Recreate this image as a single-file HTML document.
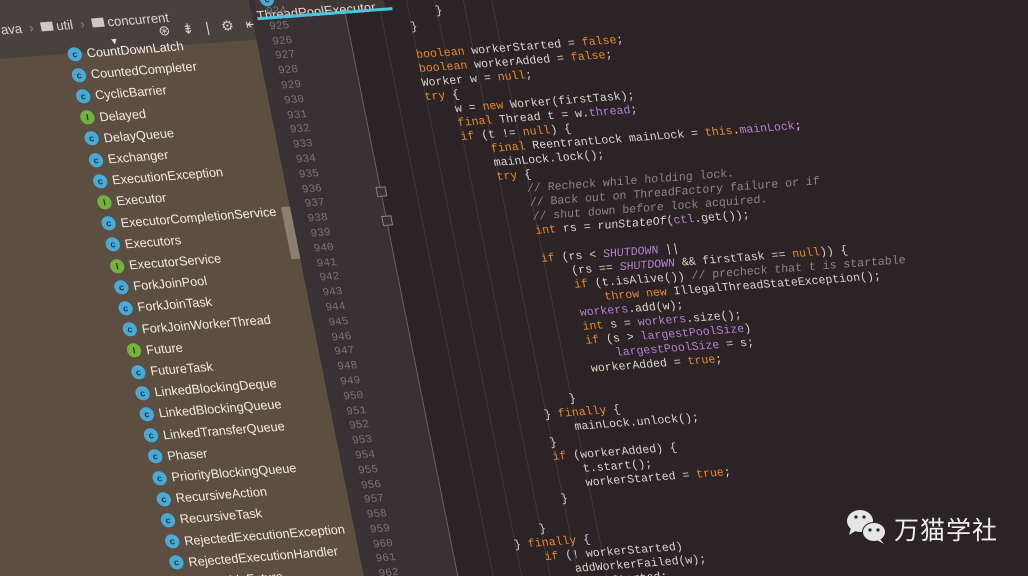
<!DOCTYPE html>
<html><head><meta charset="utf-8"><style>
html{margin:0;padding:0;width:1028px;height:576px;overflow:hidden}
body{margin:0;padding:0;width:1028px;height:576px;overflow:hidden;background:#2b2325;position:relative;font-family:"Liberation Sans",sans-serif}
#clip{position:absolute;left:0;top:0;width:1028px;height:576px;overflow:hidden}
#w{position:absolute;left:0;top:0;width:1100px;height:620px;transform-origin:0 0;transform:matrix(1,-0.075,0.2,1,0,0)}
.abs{position:absolute}
#panel{left:-300px;top:-100px;width:545px;height:720px;background:#5d4e42}
#tool{left:-300px;top:-100px;width:545px;height:158px;background:#48423e}
#menu{left:-300px;top:-100px;width:700px;height:100px;background:#3d3a39}
#gut{left:245px;top:-100px;width:92px;height:720px;background:#393133}
#tab{left:250px;top:6px;width:128px;height:32px;background:#3f3738;color:#e0d8d0;font-size:13px}
#tabline{left:250px;top:36px;width:135px;height:3px;background:#4cc4dc}
.it{position:absolute;left:56px;height:18px;color:#f2ebe4;font-size:12.6px;line-height:18px;white-space:nowrap}
.ic{display:inline-block;width:14px;height:14px;border-radius:50%;background:#4aaad6;color:#1d3a4a;font-size:9px;line-height:14px;text-align:center;vertical-align:middle;margin-right:5px;font-weight:bold;position:relative;top:-1px}
.ic.g{background:#75b33f;color:#2a3a10}
#nums{left:250px;top:25px;width:30px;text-align:right;font-family:"Liberation Mono",monospace;font-size:11px;line-height:14.8px;color:#7d7274;white-space:pre}
#code{left:344px;top:37px;font-family:"Liberation Mono",monospace;font-size:11.5px;line-height:14px;color:#dcd4cc;white-space:pre}
.k{color:#e88a2c}.p{color:#b77fd1}.c{color:#8e8586;font-style:italic}.i{font-style:italic}.pi{color:#b77fd1;font-style:italic}
.gl{position:absolute;top:-100px;width:1px;height:720px;background:#3f3739}
</style></head><body>
<div id="clip">
<div id="w">
<div id="panel" class="abs"></div>
<div id="tool" class="abs"></div>
<div id="menu" class="abs"></div>
<div class="abs" style="left:-2px;top:-14px;color:#e8e0d8;font-size:13px"><u>N</u>avigate</div>
<div class="abs" style="left:-5px;top:22px;color:#ddd5cd;font-size:13px">ava &nbsp;<span style="color:#888">›</span>&nbsp; <span style="display:inline-block;width:12px;height:9px;background:#cfc8c0"></span> util &nbsp;<span style="color:#888">›</span>&nbsp; <span style="display:inline-block;width:12px;height:9px;background:#cfc8c0"></span> concurrent</div>
<div class="abs" style="left:150px;top:34px;color:#d8d0c8;font-size:14px;letter-spacing:4px">⊛ ⇟ | ⚙ ⇤</div>
<div class="abs" style="left:100px;top:44px;color:#e8e0d8;font-size:9px">▼</div>
<div class="abs" style="left:236px;top:225px;width:11px;height:52px;background:#8c7e72"></div>
<div id="gut" class="abs"></div>
<div class="abs" style="left:337px;top:-100px;width:1px;height:720px;background:#6a6062"></div>
<div class="gl" style="left:372px"></div><div class="gl" style="left:400px"></div><div class="gl" style="left:428px"></div><div class="gl" style="left:456px"></div><div class="gl" style="left:484px"></div>
<div class="abs" style="left:333px;top:212px;width:8px;height:8px;border:1px solid #8a8082;background:#393133"></div>
<div class="abs" style="left:333px;top:241px;width:8px;height:8px;border:1px solid #8a8082;background:#393133"></div>
<div id="tab" class="abs"><span class="ic" style="margin:7px 4px 0 6px">c</span>ThreadPoolExecutor</div>
<div id="tabline" class="abs"></div>

<div class="it" style="top:50px"><span class="ic">c</span>CountDownLatch</div>
<div class="it" style="top:71.2px"><span class="ic">c</span>CountedCompleter</div>
<div class="it" style="top:92.4px"><span class="ic">c</span>CyclicBarrier</div>
<div class="it" style="top:113.6px"><span class="ic g">I</span>Delayed</div>
<div class="it" style="top:134.8px"><span class="ic">c</span>DelayQueue</div>
<div class="it" style="top:156px"><span class="ic">c</span>Exchanger</div>
<div class="it" style="top:177.2px"><span class="ic">c</span>ExecutionException</div>
<div class="it" style="top:198.4px"><span class="ic g">I</span>Executor</div>
<div class="it" style="top:219.6px"><span class="ic">c</span>ExecutorCompletionService</div>
<div class="it" style="top:240.8px"><span class="ic">c</span>Executors</div>
<div class="it" style="top:262px"><span class="ic g">I</span>ExecutorService</div>
<div class="it" style="top:283.2px"><span class="ic">c</span>ForkJoinPool</div>
<div class="it" style="top:304.4px"><span class="ic">c</span>ForkJoinTask</div>
<div class="it" style="top:325.6px"><span class="ic">c</span>ForkJoinWorkerThread</div>
<div class="it" style="top:346.8px"><span class="ic g">I</span>Future</div>
<div class="it" style="top:368px"><span class="ic">c</span>FutureTask</div>
<div class="it" style="top:389.2px"><span class="ic">c</span>LinkedBlockingDeque</div>
<div class="it" style="top:410.4px"><span class="ic">c</span>LinkedBlockingQueue</div>
<div class="it" style="top:431.6px"><span class="ic">c</span>LinkedTransferQueue</div>
<div class="it" style="top:452.8px"><span class="ic">c</span>Phaser</div>
<div class="it" style="top:474px"><span class="ic">c</span>PriorityBlockingQueue</div>
<div class="it" style="top:495.2px"><span class="ic">c</span>RecursiveAction</div>
<div class="it" style="top:516.4px"><span class="ic">c</span>RecursiveTask</div>
<div class="it" style="top:537.6px"><span class="ic">c</span>RejectedExecutionException</div>
<div class="it" style="top:558.8px"><span class="ic">c</span>RejectedExecutionHandler</div>
<div class="it" style="top:580px"><span class="ic g">I</span>RunnableFuture</div>

<div id="nums" class="abs">924
925
926
927
928
929
930
931
932
933
934
935
936
937
938
939
940
941
942
943
944
945
946
947
948
949
950
951
952
953
954
955
956
957
958
959
960
961
962</div>

<div id="code" class="abs">            }
        }

        <span class="k">boolean</span> workerStarted = <span class="k">false</span>;
        <span class="k">boolean</span> workerAdded = <span class="k">false</span>;
        Worker w = <span class="k">null</span>;
        <span class="k">try</span> {
            w = <span class="k">new</span> Worker(firstTask);
            <span class="k">final</span> Thread t = w.<span class="p">thread</span>;
            <span class="k">if</span> (t != <span class="k">null</span>) {
                <span class="k">final</span> ReentrantLock mainLock = <span class="k">this</span>.<span class="p">mainLock</span>;
                mainLock.lock();
                <span class="k">try</span> {
                    <span class="c">// Recheck while holding lock.</span>
                    <span class="c">// Back out on ThreadFactory failure or if</span>
                    <span class="c">// shut down before lock acquired.</span>
                    <span class="k">int</span> rs = <span class="i">runStateOf</span>(<span class="p">ctl</span>.get());

                    <span class="k">if</span> (rs &lt; <span class="pi">SHUTDOWN</span> ||
                        (rs == <span class="pi">SHUTDOWN</span> &amp;&amp; firstTask == <span class="k">null</span>)) {
                        <span class="k">if</span> (t.isAlive()) <span class="c">// precheck that t is startable</span>
                            <span class="k">throw new</span> IllegalThreadStateException();
                        <span class="p">workers</span>.add(w);
                        <span class="k">int</span> s = <span class="p">workers</span>.size();
                        <span class="k">if</span> (s &gt; <span class="p">largestPoolSize</span>)
                            <span class="p">largestPoolSize</span> = s;
                        workerAdded = <span class="k">true</span>;

                    }
                } <span class="k">finally</span> {
                    mainLock.unlock();
                }
                <span class="k">if</span> (workerAdded) {
                    t.start();
                    workerStarted = <span class="k">true</span>;
                }

            }
        } <span class="k">finally</span> {
            <span class="k">if</span> (! workerStarted)
                addWorkerFailed(w);
        <span class="k">return</span> workerStarted;</div>
</div>
</div>

<svg class="abs" style="left:846px;top:508px" width="44" height="40" viewBox="0 0 44 40">
<ellipse cx="14" cy="13" rx="13" ry="11" fill="#e6e6e6"/>
<path d="M5 20 L3 27 L11 22 Z" fill="#e6e6e6"/>
<ellipse cx="28" cy="24" rx="12" ry="10" fill="#2b2325"/>
<ellipse cx="28" cy="24" rx="11" ry="9" fill="#e6e6e6"/>
<path d="M34 31 L38 36 L31 32 Z" fill="#e6e6e6"/>
<circle cx="10" cy="9" r="1.6" fill="#2b2325"/><circle cx="18" cy="9" r="1.6" fill="#2b2325"/>
<circle cx="24" cy="22" r="1.6" fill="#2b2325"/><circle cx="32" cy="22" r="1.6" fill="#2b2325"/>
</svg>
<div class="abs" style="left:894px;top:511px;color:#efefef;font-size:25px;font-family:'Liberation Sans','Noto Sans CJK SC',sans-serif;letter-spacing:1px">万猫学社</div>
</body></html>
